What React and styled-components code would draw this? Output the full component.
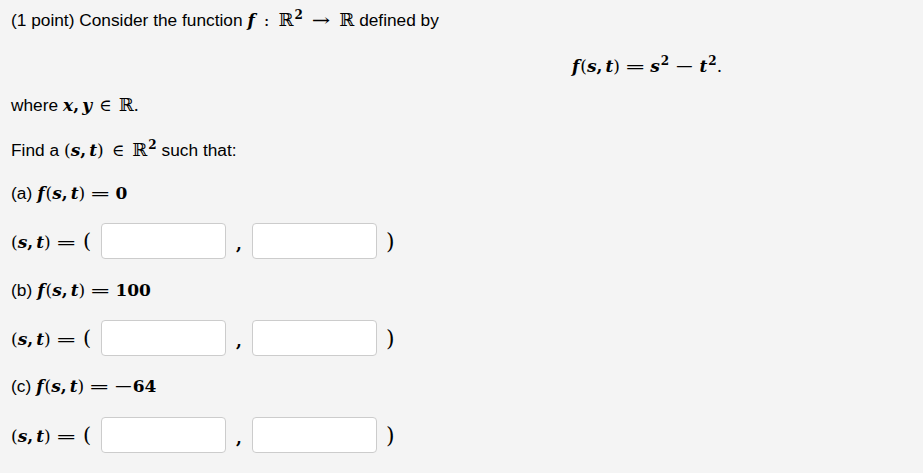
import React from "react";
import styled, { createGlobalStyle } from "styled-components";

const Global = createGlobalStyle`
  html, body {
    margin: 0;
    padding: 0;
    background: #f4f4f4;
  }
  body {
    font-family: "Liberation Sans", Arial, sans-serif;
    font-size: 17.3px;
    color: #000;
  }
`;

const Page = styled.div`
  padding: 0 11px;
  display: flex;
  flex-direction: column;
`;

const Line = styled.div`
  height: 28px;
  margin-top: ${(p) => p.$top || 0}px;
  line-height: 28px;
  white-space: nowrap;
  padding-left: ${(p) => p.$indent || 0}px;
`;

const M = styled.span`
  font-family: "DejaVu Serif", "Liberation Serif", serif;
  font-size: 17px;
  margin: 0 ${(p) => p.$pad ?? 5}px;
`;

const V = styled.i`
  font-style: italic;
  font-weight: bold;
  margin-right: ${(p) => p.$kern || 0}px;
`;

const N = styled.span`
  font-weight: bold;
`;

// relation / binary operator, stretched a bit to match the wide TeX glyphs
const Op = styled.span`
  display: inline-block;
  font-weight: normal;
  transform: scaleX(${(p) => p.$sx || 1});
  margin: 0 ${(p) => p.$gap ?? 5}px;
`;

const P = styled.span`
  font-weight: normal;
`;

const Comma = styled.span`
  font-weight: bold;
  margin-right: 3px;
`;

const BB = styled.span`
  font-family: "DejaVu Serif", serif;
  font-weight: normal;
  font-size: 18px;
`;

const Sup = styled.sup`
  font-size: 12px;
  font-weight: bold;
  vertical-align: 7px;
  line-height: 0;
  margin-left: 1px;
`;

const AnswerRow = styled.div`
  height: 36px;
  margin-top: ${(p) => p.$top}px;
  display: flex;
  align-items: center;
`;

const Lead = styled.span`
  font-family: "DejaVu Serif", serif;
  font-size: 17px;
  white-space: nowrap;
  width: 90px;
`;

const BigParen = styled.span`
  font-size: 21px;
  line-height: 1;
  margin-left: 2px;
`;

const Box = styled.input`
  width: 125px;
  height: 36px;
  box-sizing: border-box;
  border: 1px solid #cccccc;
  border-radius: 4px;
  background: #fff;
  outline: none;
  padding: 4px 6px;
  font-size: 14px;
`;

const Sep = styled.span`
  font-family: "DejaVu Serif", serif;
  font-weight: bold;
  font-size: 17px;
  width: 26px;
  text-align: center;
  padding-top: 6px;
`;

const Close = styled.span`
  font-family: "DejaVu Serif", serif;
  font-size: 22px;
  margin-left: 9px;
`;

const Eq = () => (
  <Op $sx={1.5} $gap={8}>
    =
  </Op>
);

const Fst = () => (
  <>
    <V $kern={1}>f</V>
    <P>(</P>
    <V>s</V>
    <Comma>,</Comma>
    <V>t</V>
    <P>)</P>
  </>
);

const St = () => (
  <>
    <P>(</P>
    <V>s</V>
    <Comma>,</Comma>
    <V>t</V>
    <P>)</P>
  </>
);

const Part = ({ label, value, top, ansTop }) => (
  <>
    <Line $top={top}>
      ({label})
      <M>
        <Fst />
        <Eq />
        {value}
      </M>
    </Line>
    <AnswerRow $top={ansTop}>
      <Lead>
        <St />
        <Eq />
        <BigParen>(</BigParen>
      </Lead>
      <Box />
      <Sep>,</Sep>
      <Box />
      <Close>)</Close>
    </AnswerRow>
  </>
);

export default function App() {
  return (
    <Page>
      <Global />
      <Line $top={6}>
        (1 point) Consider the function
        <M>
          <V>f</V>
          <Op $gap={9}>:</Op>
          <BB>ℝ</BB>
          <Sup>2</Sup>
          <Op $sx={1.3} $gap={11}>
            →
          </Op>
          <BB>ℝ</BB>
        </M>
        defined by
      </Line>
      <Line $top={18} $indent={561}>
        <M $pad={0}>
          <Fst />
          <Eq />
          <V>s</V>
          <Sup>2</Sup>
          <Op $sx={1.4} $gap={8}>
            −
          </Op>
          <V>t</V>
          <Sup>2</Sup>
          <P>.</P>
        </M>
      </Line>
      <Line $top={11}>
        where
        <M>
          <V>x</V>
          <Comma>,</Comma>
          <V>y</V>
          <Op $gap={7}>∈</Op>
          <BB>ℝ</BB>
          <P>.</P>
        </M>
      </Line>
      <Line $top={17}>
        Find a
        <M>
          <St />
          <Op $gap={8}>∈</Op>
          <BB>ℝ</BB>
          <Sup>2</Sup>
        </M>
        such that:
      </Line>
      <Part label="a" value={<N>0</N>} top={15} ansTop={16} />
      <Part label="b" value={<N>100</N>} top={17} ansTop={16} />
      <Part
        label="c"
        value={
          <>
            <Op $sx={1.4} $gap={2}>
              −
            </Op>
            <N>64</N>
          </>
        }
        top={16}
        ansTop={17}
      />
    </Page>
  );
}
